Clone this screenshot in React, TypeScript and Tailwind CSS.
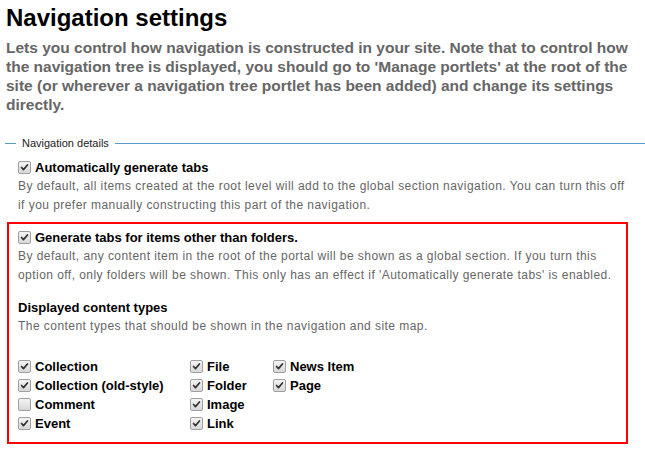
const Check = ({ checked = true }: { checked?: boolean }) => (
  <span className="inline-flex h-[13px] w-[13px] shrink-0 items-center justify-center rounded-[2px] border border-[#a0a0a0] bg-gradient-to-b from-[#f4f4f4] to-[#d8d8d8]">
    {checked && (
      <svg viewBox="0 0 13 13" className="h-[13px] w-[13px]">
        <path d="M3 6.5 L5.3 9 L10 3.5" fill="none" stroke="#333" strokeWidth={2} strokeLinecap="round" strokeLinejoin="round" />
      </svg>
    )}
  </span>
);

const types = [
  [
    ['Collection', true],
    ['Collection (old-style)', true],
    ['Comment', false],
    ['Event', true],
  ],
  [
    ['File', true],
    ['Folder', true],
    ['Image', true],
    ['Link', true],
  ],
  [
    ['News Item', true],
    ['Page', true],
  ],
] as [string, boolean][][];

const colWidths = ['w-[172px]', 'w-[83px]', 'w-auto'];

export default function App() {
  return (
    <div className="min-h-[459px] w-[645px] overflow-hidden bg-white font-['Liberation_Sans',Arial,sans-serif]">
      <h1 className="pl-[6px] pt-[3px] text-[24px] font-bold leading-[30px] text-black">Navigation settings</h1>
      <p className="mt-[5px] pl-[6px] pr-[2px] text-[15.5px] font-bold leading-[19px] text-[#666]">
        Lets you control how navigation is constructed in your site. Note that to control how the navigation tree is displayed, you should go to 'Manage portlets' at the root of the site (or wherever a navigation tree portlet has been added) and change its settings directly.
      </p>

      <fieldset className="mt-[23px] ml-[5px] border-t border-[#5b9bc9]">
        <legend className="ml-[11px] px-[6px] text-[11px] leading-[12px] text-[#222]">Navigation details</legend>

        <div className="pl-[13px] pr-[17px] pt-[9px]">
          <label className="flex items-center gap-[4px] text-[13px] font-bold leading-[19px] text-black">
            <Check />
            <span>Automatically generate tabs</span>
          </label>
          <p className="text-[12px] leading-[19px] tracking-[0.45px] text-[#666]">
            By default, all items created at the root level will add to the global section navigation. You can turn this off if you prefer manually constructing this part of the navigation.
          </p>
        </div>

        <div className="mt-[7px] ml-[2px] w-[621px] border-2 border-[#f00] pl-[9px] pb-[9px] pt-[4px]">
          <label className="flex items-center gap-[4px] text-[13px] font-bold leading-[19px] text-black">
            <Check />
            <span>Generate tabs for items other than folders.</span>
          </label>
          <p className="text-[12px] leading-[19px] tracking-[0.45px] text-[#666]">
            By default, any content item in the root of the portal will be shown as a global section. If you turn this option off, only folders will be shown. This only has an effect if 'Automatically generate tabs' is enabled.
          </p>

          <h3 className="mt-[13px] text-[13px] font-bold leading-[19px] text-black">Displayed content types</h3>
          <p className="text-[12px] leading-[19px] tracking-[0.45px] text-[#666]">
            The content types that should be shown in the navigation and site map.
          </p>

          <div className="mt-[21px] flex">
            {types.map((col, i) => (
              <div key={i} className={`flex flex-col ${colWidths[i]}`}>
                {col.map(([name, on]) => (
                  <label key={name} className="flex items-center gap-[4px] text-[13px] font-bold leading-[19px] text-black">
                    <Check checked={on} />
                    <span>{name}</span>
                  </label>
                ))}
              </div>
            ))}
          </div>
        </div>
      </fieldset>
    </div>
  );
}
